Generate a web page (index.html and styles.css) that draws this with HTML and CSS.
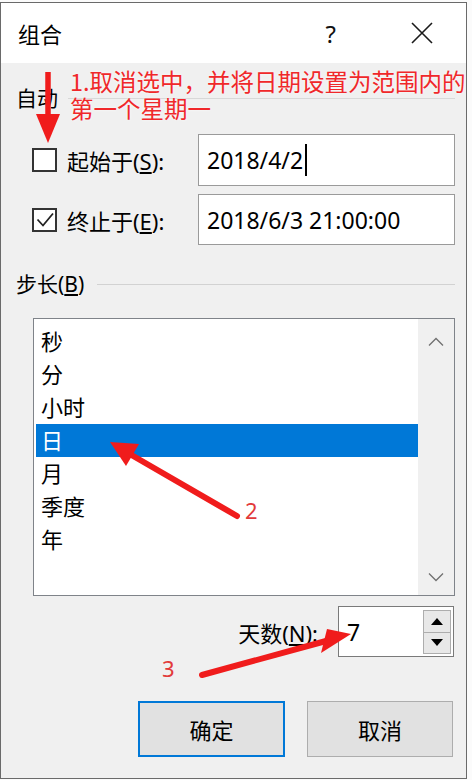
FILE: index.html
```html
<!DOCTYPE html>
<html lang="zh-CN">
<head>
<meta charset="utf-8">
<title>组合</title>
<link rel="stylesheet" href="styles.css">
</head>
<body>
<div class="dialog">
  <div class="titlebar">
    <span class="title">组合</span>
    <span class="help">?</span>
    <svg class="close" width="22" height="22" viewBox="0 0 22 22"><path d="M1 1 L21 21 M21 1 L1 21" stroke="#1a1a1a" stroke-width="1.6" fill="none"/></svg>
  </div>
  <div class="body">
    <div class="group-head">
      <span class="group-label">自动</span>
      <span class="rule"></span>
    </div>
    <div class="field-row first">
      <span class="check"></span>
      <span class="field-label">起始于(<u>S</u>):</span>
      <div class="textbox">2018/4/2<span class="caret"></span></div>
    </div>
    <div class="field-row second">
      <span class="check"><svg width="20" height="20" viewBox="0 0 20 20"><path d="M2.5 9.5 L8 15.5 L18 3.5" stroke="#222" stroke-width="1.8" fill="none"/></svg></span>
      <span class="field-label">终止于(<u>E</u>):</span>
      <div class="textbox">2018/6/3 21:00:00</div>
    </div>
    <div class="group-head step">
      <span class="group-label">步长(<u>B</u>)</span>
      <span class="rule step-rule"></span>
    </div>
    <div class="listbox">
      <div class="items">
        <div class="item">秒</div>
        <div class="item">分</div>
        <div class="item">小时</div>
        <div class="item selected">日</div>
        <div class="item">月</div>
        <div class="item">季度</div>
        <div class="item">年</div>
      </div>
      <div class="scrollbar">
        <svg width="16" height="10" viewBox="0 0 16 10"><path d="M1 8.5 L8 1.5 L15 8.5" stroke="#707070" stroke-width="1.3" fill="none"/></svg>
        <svg width="16" height="10" viewBox="0 0 16 10"><path d="M1 1.5 L8 8.5 L15 1.5" stroke="#707070" stroke-width="1.3" fill="none"/></svg>
      </div>
    </div>
    <div class="days-row">
      <span class="days-label">天数(<u>N</u>):</span>
      <div class="spinbox">
        <span class="spin-value">7</span>
        <div class="spin-buttons">
          <span class="spin-btn"><svg width="12" height="7" viewBox="0 0 12 7"><path d="M0 7 L6 0 L12 7 Z" fill="#000"/></svg></span>
          <span class="spin-btn"><svg width="12" height="7" viewBox="0 0 12 7"><path d="M0 0 L6 7 L12 0 Z" fill="#000"/></svg></span>
        </div>
      </div>
    </div>
    <div class="buttons">
      <button class="btn default">确定</button>
      <button class="btn">取消</button>
    </div>
  </div>
</div>

<div class="note note-1">1.取消选中，并将日期设置为范围内的<br>第一个星期一</div>
<span class="note-num num-2">2</span>
<span class="note-num num-3">3</span>

<svg class="overlay" width="472" height="780" viewBox="0 0 472 780">
  <g fill="#f01c1c" stroke="#f01c1c">
    <line x1="48" y1="72" x2="48" y2="118" stroke-width="5.5"/>
    <polygon points="36,114 60,114 48,143" stroke="none"/>
    <line x1="237" y1="516" x2="128" y2="453" stroke-width="6" stroke-linecap="round"/>
    <polygon points="110,442 139,444 126,466" stroke="none"/>
    <line x1="202" y1="675" x2="326" y2="641" stroke-width="6" stroke-linecap="round"/>
    <polygon points="351,634 327,629 321,653" stroke="none"/>
  </g>
</svg>
</body>
</html>
```

FILE: styles.css
```css
* { box-sizing: border-box; }

html, body {
  margin: 0;
  padding: 0;
}

body {
  width: 472px;
  height: 780px;
  overflow: hidden;
  position: relative;
  background: #fbfbfb;
  font-family: "Noto Sans", "Noto Sans CJK SC", sans-serif;
  color: #000;
}

.dialog {
  margin-top: 2px;
  width: 467px;
  height: 777px;
  border: 1px solid #6a6a6a;
  background: #f0f0f0;
  display: flex;
  flex-direction: column;
}

.titlebar {
  flex: none;
  height: 60px;
  background: #fff;
  display: flex;
  align-items: center;
  padding-left: 17px;
}

.title {
  flex: 1;
  font-size: 22px;
}

.help {
  font-size: 24px;
  margin-right: 75px;
  color: #111;
}

.close {
  margin-right: 33px;
}

.body {
  flex: 1;
  padding: 23px 11px 0 14px;
  display: flex;
  flex-direction: column;
}

.group-head {
  height: 24px;
  display: flex;
  align-items: center;
}

.group-label {
  font-size: 21px;
  margin-left: 1px;
  line-height: 24px;
  white-space: nowrap;
}

.rule {
  flex: 1;
  height: 1px;
  background: #d8d8d8;
  margin-left: 10px;
}

.field-row {
  display: flex;
  align-items: center;
  padding-left: 17px;
}

.field-row.first {
  margin-top: 24px;
  height: 52px;
}

.field-row.second {
  margin-top: 8px;
  height: 51px;
}

.check {
  width: 25px;
  height: 24px;
  border: 2px solid #333;
  background: #fff;
  display: flex;
  align-items: center;
  justify-content: center;
  flex: none;
}

.field-label {
  flex: 1;
  margin-left: 10px;
  font-size: 22px;
  white-space: nowrap;
}

.textbox {
  width: 257px;
  height: 100%;
  border: 1px solid #9a9a9a;
  background: #fff;
  font-size: 23px;
  padding-left: 8px;
  display: flex;
  align-items: center;
  white-space: nowrap;
}

.caret {
  width: 2px;
  height: 32px;
  background: #000;
  margin-left: 2px;
}

.group-head.step {
  margin-top: 27px;
}

.step-rule {
  margin-left: 13px;
  background: #d2d2d2;
}

.listbox {
  margin-top: 22px;
  margin-left: 18px;
  width: 422px;
  height: 278px;
  border: 1px solid #7f8389;
  display: flex;
  background: #fff;
}

.items {
  flex: 1;
  padding: 6px 0 0 2px;
  background: #fff;
}

.item {
  height: 33px;
  line-height: 33px;
  font-size: 22px;
  padding-left: 5px;
}

.item.selected {
  background: #0078d7;
  color: #fff;
}

.scrollbar {
  width: 36px;
  background: #f0f0f0;
  display: flex;
  flex-direction: column;
  align-items: center;
  justify-content: space-between;
  padding: 18px 0 13px;
}

.days-row {
  margin-top: 10px;
  height: 51px;
  display: flex;
  justify-content: flex-end;
  align-items: center;
  padding-right: 1px;
}

.days-label {
  font-size: 22px;
  margin-right: 20px;
}

.spinbox {
  width: 116px;
  height: 51px;
  border: 1px solid #7a7a7a;
  background: #fff;
  display: flex;
}

.spin-value {
  flex: 1;
  font-size: 23px;
  padding-left: 8px;
  display: flex;
  align-items: center;
}

.spin-buttons {
  margin: 3px 2px 2px 0;
  width: 28px;
  display: flex;
  flex-direction: column;
}

.spin-btn {
  flex: 1;
  border: 1px solid #adadad;
  background: #e8e8e8;
  display: flex;
  align-items: center;
  justify-content: center;
}

.spin-btn + .spin-btn {
  border-top: none;
}

.buttons {
  margin-top: 44px;
  display: flex;
  justify-content: flex-end;
  gap: 22px;
  padding-right: 2px;
}

.btn {
  width: 146px;
  height: 56px;
  border: 1px solid #adadad;
  background: #e1e1e1;
  font-family: "Noto Sans", "Noto Sans CJK SC", sans-serif;
  font-size: 22px;
  color: #000;
  padding: 0;
}

.btn.default {
  width: 147px;
  border: 2px solid #0078d7;
}

.note {
  position: absolute;
  left: 70px;
  top: 68px;
  font-family: "Noto Sans CJK SC", sans-serif;
  font-size: 23.5px;
  line-height: 27px;
  color: #f0282a;
  white-space: nowrap;
  text-shadow: 0 0 3px rgba(255,255,255,0.8);
}

.note-num {
  position: absolute;
  font-family: "Noto Sans", sans-serif;
  font-size: 22px;
  color: #e23a3a;
  line-height: 1;
}

.num-2 { left: 245px; top: 499px; }
.num-3 { left: 162px; top: 657px; }

.overlay {
  position: absolute;
  left: 0;
  top: 0;
  pointer-events: none;
}
```
